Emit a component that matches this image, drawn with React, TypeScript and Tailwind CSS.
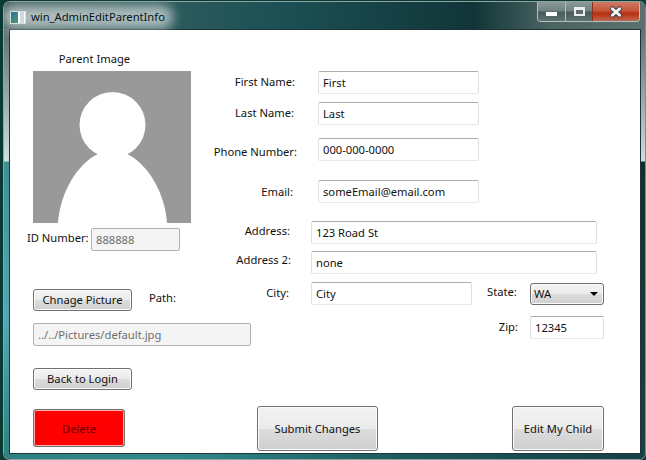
import React from 'react';

const inputClass =
  'h-[23px] rounded-[2px] border border-[#dbe0e8] border-t-[#abadb3] border-b-[#e3e9ef] bg-white px-[4px] text-[11.2px] text-[#111] outline-none';
const disabledClass =
  'h-[23px] rounded-[2px] border border-[#adb2b5] bg-[#f4f4f4] px-[4px] text-[11.2px] text-[#6d6d6d] outline-none';
const buttonClass =
  'rounded-[3px] border border-[#707070] bg-[linear-gradient(#f3f3f3_0%,#ebebeb_50%,#dddddd_50%,#cfcfcf_100%)] text-[11.2px] text-[#111] shadow-[inset_0_0_0_1px_#fbfbfb]';

const Silhouette = () => (
  <svg width="158" height="152" viewBox="0 0 158 152" className="block">
    <rect width="158" height="152" fill="#999999" />
    <circle cx="79.5" cy="54" r="33" fill="#fff" />
    <path d="M25 152C27 122 44 93 65 83L94 83C115 93 132 122 134 152Z" fill="#fff" />
  </svg>
);

const TitleBar = () => (
  <div className="flex h-[28px] bg-[linear-gradient(90deg,#3d5c5a_0px,#2c5a5c_170px,#1b5054_280px,#113538_470px,#4a6462_545px,#5d7270_646px)]">
    <div className="relative ml-[6px] mt-[8px] flex h-[14px] items-center">
      <div className="absolute -inset-x-[8px] -inset-y-[5px] rounded-[12px] bg-white/60 blur-[6px]" />
      <div className="relative flex h-[13px] w-[16px] border border-[#d5dcdc] bg-white">
        <span className="w-[7px] bg-[linear-gradient(135deg,#2a6f9a,#4f9a6a)]" />
        <span className="ml-[2px] w-[4px] bg-[#c9dbe0]" />
      </div>
      <span className="relative ml-[5px] text-[11.2px] text-[#06121a]">win_AdminEditParentInfo</span>
    </div>
    <div className="ml-auto mr-[5px] flex h-[20px] overflow-hidden rounded-b-[4px] border border-t-0 border-[#b4c0c0]">
      <div className="flex w-[28px] justify-center border-r border-[#b4c0c0] bg-[linear-gradient(#8b9a98_0%,#6f8280_48%,#465a5a_52%,#5f7270_100%)] pt-[10px]">
        <span className="h-[4px] w-[11px] bg-white" />
      </div>
      <div className="flex w-[26px] justify-center bg-[linear-gradient(#8b9a98_0%,#6f8280_48%,#465a5a_52%,#5f7270_100%)] pt-[5px]">
        <span className="h-[9px] w-[11px] border-[2px] border-t-[3px] border-[#e8eeee] bg-[#5a6c70]" />
      </div>
      <div className="flex w-[47px] justify-center border-l border-[#8a3020] bg-[linear-gradient(#cf7a64_0%,#c4563c_45%,#b8300f_60%,#c04a2c_80%,#b86a55_100%)] pt-[3px]">
        <svg width="16" height="14" viewBox="0 0 16 14">
          <path d="M3 2.5L13 11.5M13 2.5L3 11.5" stroke="#39404c" strokeWidth="5" />
          <path d="M3.5 3L12.5 11M12.5 3L3.5 11" stroke="#f2f4f6" strokeWidth="3" />
        </svg>
      </div>
    </div>
  </div>
);

export default function App() {
  return (
    <div className="h-[460px] w-[646px] overflow-hidden bg-[#0a3a34] pl-[3px] pt-[1px] font-['Noto_Sans',sans-serif]">
      <div className="flex h-[459px] w-[643px] flex-col overflow-hidden rounded-[7px] border border-[#8fa3a3] border-r-[#7b8f8f]">
        <TitleBar />
        <div className="flex h-[425px]">
          <div className="w-[5px] bg-[linear-gradient(#5c716e_0px,#cfe0de_132px,#3f8f94_133px,#55a7b6_290px,#2f8080_425px)]" />
          <div className="h-[425px] w-[632px] border border-[#1d3335] bg-white pl-[23px] pt-[21px] text-[11.2px] leading-[16px] text-[#111]">
            <div className="flex">
              <div className="w-[172px]">
                <div className="w-[123px] text-center">Parent Image</div>
                <div className="mt-[4px]">
                  <Silhouette />
                </div>
                <div className="-ml-[6px] mt-[5px] flex">
                  <span className="mt-[2px] w-[64px] whitespace-nowrap">ID Number:</span>
                  <input readOnly disabled value="888888" className={`${disabledClass} w-[89px]`} />
                </div>
              </div>
              <div className="mt-[20px]">
                <div className="flex">
                  <span className="mt-[3px] w-[90px] text-right">First Name:</span>
                  <input readOnly value="First" className={`${inputClass} ml-[23px] w-[161px]`} />
                </div>
                <div className="mt-[8px] flex">
                  <span className="mt-[3px] w-[89px] text-right">Last Name:</span>
                  <input readOnly value="Last" className={`${inputClass} ml-[24px] w-[161px]`} />
                </div>
                <div className="mt-[13px] flex">
                  <span className="mt-[6px] w-[92px] whitespace-nowrap text-right">Phone Number:</span>
                  <input readOnly value="000-000-0000" className={`${inputClass} ml-[21px] w-[161px]`} />
                </div>
                <div className="mt-[19px] flex">
                  <span className="mt-[4px] w-[88px] text-right">Email:</span>
                  <input readOnly value="someEmail@email.com" className={`${inputClass} ml-[25px] w-[161px]`} />
                </div>
                <div className="mt-[18px] flex">
                  <span className="mt-[2px] w-[85px] text-right">Address:</span>
                  <input readOnly value="123 Road St" className={`${inputClass} ml-[21px] w-[286px]`} />
                </div>
                <div className="mt-[7px] flex">
                  <span className="mt-[1px] w-[86px] text-right">Address 2:</span>
                  <input readOnly value="none" className={`${inputClass} ml-[20px] w-[286px]`} />
                </div>
              </div>
            </div>

            <div className="mt-[8px] flex">
              <div className="w-[218px] pt-[7px]">
                <div className="flex">
                  <button className={`${buttonClass} h-[22px] w-[99px]`}>Chnage Picture</button>
                  <span className="ml-[17px] mt-[1px]">Path:</span>
                </div>
                <input readOnly disabled value="../../Pictures/default.jpg" className={`${disabledClass} mt-[12px] w-[218px]`} />
                <button className={`${buttonClass} mt-[22px] block h-[22px] w-[99px]`}>Back to Login</button>
              </div>
              <div className="w-[353px]">
                <div className="flex">
                  <span className="mt-[3px] w-[38px] text-right">City:</span>
                  <input readOnly value="City" className={`${inputClass} ml-[22px] w-[161px]`} />
                  <span className="ml-[15px] mt-[2px] w-[30px]">State:</span>
                  <div className={`${buttonClass} ml-[13px] mt-[1px] flex h-[22px] w-[74px] items-center justify-between pl-[3px] pr-[5px]`}>
                    <span>WA</span>
                    <span className="h-0 w-0 border-x-[4px] border-t-[4px] border-x-transparent border-t-black" />
                  </div>
                </div>
                <div className="mt-[11px] flex justify-end">
                  <span className="mt-[3px]">Zip:</span>
                  <input readOnly value="12345" className={`${inputClass} ml-[12px] w-[74px]`} />
                </div>
              </div>
            </div>

            <div className="mt-[16px] flex items-start">
              <button className="mt-[3px] h-[38px] w-[92px] rounded-[3px] border border-[#707070] bg-[#ff0000] pt-[1px] text-[11.2px] text-[#6a0000] shadow-[inset_0_0_0_1px_#ffb0b0]">
                Delete
              </button>
              <button className={`${buttonClass} ml-[132px] h-[45px] w-[121px]`}>Submit Changes</button>
              <button className={`${buttonClass} ml-[134px] h-[45px] w-[92px]`}>Edit My Child</button>
            </div>
          </div>
          <div className="w-[4px] bg-[linear-gradient(#5c716e_0px,#cfdcdc_132px,#10302f_133px,#1a4145_425px)]" />
        </div>
        <div className="h-[5px] bg-[linear-gradient(90deg,#2f8080_0px,#2f8a8c_170px,#1c5a5c_400px,#173f42_646px)]" />
      </div>
    </div>
  );
}
